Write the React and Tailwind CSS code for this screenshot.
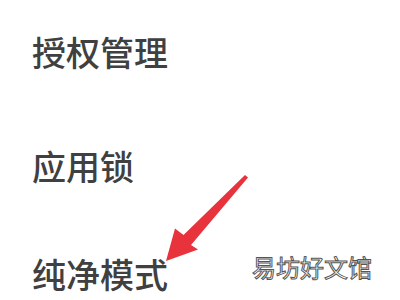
export default function App() {
  return (
    <div className="relative w-[400px] h-[300px] overflow-hidden bg-white font-['Noto_Sans_CJK_SC',sans-serif]">
      <div className="flex flex-col pl-[32px] pt-[35px] text-[34px] leading-none font-medium text-[#404040]">
        <div>授权管理</div>
        <div className="mt-[80px]">应用锁</div>
        <div className="mt-[74px]">纯净模式</div>
      </div>
      <svg className="absolute left-0 top-0" width="400" height="300" viewBox="0 0 400 300">
        <path d="M245 175 L248 177.5 L191 245 L198 249.5 L166 261 L175 228.5 L183.5 235 Z" fill="#e8323c" strokeLinejoin="round" />
      </svg>
      <div className="absolute left-[252px] top-[255px] text-[24px] leading-none text-white font-['Noto_Sans_CJK_SC',sans-serif] [-webkit-text-stroke:1px_#555]">
        易坊好文馆
      </div>
    </div>
  );
}
